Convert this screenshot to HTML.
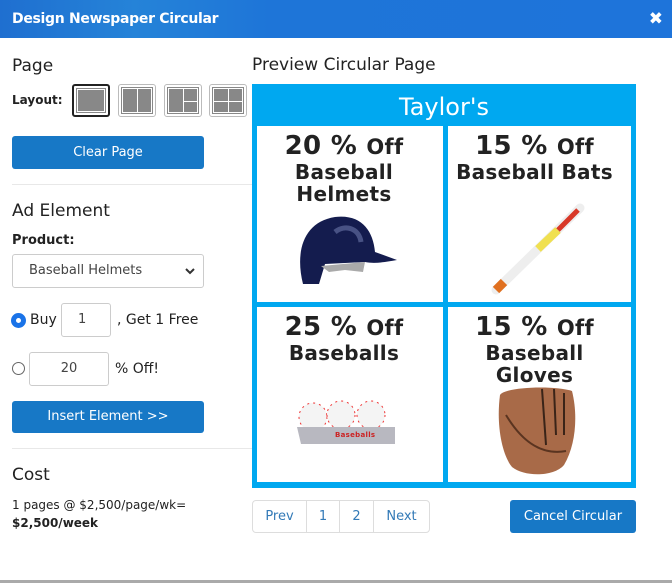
<!DOCTYPE html>
<html><head><style>
*{margin:0;padding:0;box-sizing:border-box}
body{width:672px;height:583px;background:#fff;font-family:"DejaVu Sans","Liberation Sans",sans-serif;color:#222;position:relative;overflow:hidden}
.a{position:absolute}
.hdr{left:0;top:0;width:672px;height:38px;background:linear-gradient(90deg,#1f6fd0 0%,#2583d8 20%,#1e75d8 40%,#1e74da 100%);color:#fff;font-weight:bold;font-size:14px;line-height:38px;padding-left:12px;letter-spacing:-0.3px}
.x{right:9px;top:0;color:#fff;font-size:17px;line-height:38px;font-weight:bold}
h3{position:absolute;font-weight:normal;font-size:17px;color:#222}
.btn{position:absolute;background:#1778c6;color:#fff;font-size:13px;text-align:center;border-radius:3px}
.lay{position:absolute;top:84px;width:38px;height:33px;border:1px solid #bbb;border-radius:3px;padding:3px}
.lay div{width:100%;height:100%;background:#888;border:1px solid #fff;outline:1px solid #888;position:relative}
.inp{position:absolute;border:1px solid #ccc;border-radius:3px;font-size:13px;color:#444;text-align:center}
.cell{position:absolute;background:#fff;text-align:center;font-weight:bold;color:#222;font-size:20px;line-height:22px;letter-spacing:0.3px}
.cell .p{font-size:26px;line-height:28px;margin-top:6px}
.cell .p span{font-size:21px}
.pg{position:absolute;top:500px;height:33px;border:1px solid #ddd;color:#337ab7;font-size:13px;line-height:31px;text-align:center}
</style></head><body>
<div class="a hdr">Design Newspaper Circular</div>
<div class="a x">✖</div>

<h3 style="left:12px;top:56px">Page</h3>
<div class="a" style="left:12px;top:93px;font-size:12px;font-weight:bold">Layout:</div>
<div class="lay" style="left:72px;border:2px solid #222"><div></div></div>
<div class="lay" style="left:118px"><div><span class="a" style="left:50%;top:0;bottom:0;width:1px;background:#fff"></span></div></div>
<div class="lay" style="left:164px"><div><span class="a" style="left:50%;top:0;bottom:0;width:1px;background:#fff"></span><span class="a" style="left:50%;right:0;top:50%;height:1px;background:#fff"></span></div></div>
<div class="lay" style="left:209px"><div><span class="a" style="left:50%;top:0;bottom:0;width:1px;background:#fff"></span><span class="a" style="left:0;right:0;top:50%;height:1px;background:#fff"></span></div></div>
<div class="btn" style="left:12px;top:136px;width:192px;height:33px;line-height:33px">Clear Page</div>
<div class="a" style="left:12px;top:184px;width:240px;height:1px;background:#e8e8e8"></div>
<h3 style="left:12px;top:201px">Ad Element</h3>
<div class="a" style="left:12px;top:233px;font-size:13px;font-weight:bold">Product:</div>
<div class="inp" style="left:12px;top:254px;width:192px;height:34px;line-height:32px;text-align:left;padding-left:16px">Baseball Helmets<svg class="a" style="right:8px;top:13px" width="10" height="7" viewBox="0 0 10 7"><path d="M1 1 L5 5 L9 1" stroke="#333" stroke-width="2" fill="none"/></svg></div>
<div class="a" style="left:12px;top:314px;width:13px;height:13px;border-radius:50%;border:4px solid #1a73e8;background:#fff;box-shadow:0 0 0 1px #1a73e8"></div>
<div class="a" style="left:30px;top:312px;font-size:14px">Buy</div>
<div class="inp" style="left:61px;top:303px;width:50px;height:34px;line-height:32px;text-align:left;padding-left:16px">1</div>
<div class="a" style="left:117px;top:312px;font-size:14px">, Get 1 Free</div>
<div class="a" style="left:12px;top:362px;width:13px;height:13px;border-radius:50%;border:1px solid #666"></div>
<div class="inp" style="left:29px;top:352px;width:80px;height:34px;line-height:32px">20</div>
<div class="a" style="left:115px;top:361px;font-size:14px">% Off!</div>
<div class="btn" style="left:12px;top:401px;width:192px;height:32px;line-height:32px">Insert Element &gt;&gt;</div>
<div class="a" style="left:12px;top:448px;width:240px;height:1px;background:#e8e8e8"></div>
<h3 style="left:12px;top:465px">Cost</h3>
<div class="a" style="left:12px;top:496px;font-size:12px;line-height:18px">1 pages @ $2,500/page/wk=<br><b>$2,500/week</b></div>

<h3 style="left:252px;top:55px">Preview Circular Page</h3>
<div class="a" style="left:252px;top:84px;width:384px;height:404px;background:#00a8f0"></div>
<div class="a" style="left:252px;top:93px;width:384px;text-align:center;color:#fff;font-size:24px">Taylor's</div>

<div class="cell" style="left:257px;top:126px;width:186px;height:176px;padding-right:12px">
<div class="p">20 % <span>Off</span></div>Baseball<br>Helmets
<svg class="a" style="left:38px;top:86px" width="106" height="80" viewBox="0 0 106 80"><path d="M8 72 C0 40 8 10 40 5 C66 2 78 18 80 40 L102 48 C90 50 80 52 70 50 L30 52 L24 72 Z" fill="#141c4e"/><path d="M26 54 L70 50 L68 60 L50 58 L34 60 Z" fill="#aaa"/><path d="M40 20 C50 12 64 16 66 30" stroke="#6b76a8" stroke-width="5" fill="none" opacity=".6"/></svg>
</div>
<div class="cell" style="left:448px;top:126px;width:183px;height:176px;padding-right:10px">
<div class="p">15 % <span>Off</span></div>Baseball Bats
<svg class="a" style="left:40px;top:76px" width="100" height="95" viewBox="0 0 100 95"><path d="M8 88 L92 6" stroke="#eee" stroke-width="9" stroke-linecap="round"/><path d="M50 47 L70 28" stroke="#f0e050" stroke-width="8"/><path d="M70 28 L90 8" stroke="#d83828" stroke-width="5"/><path d="M8 88 L16 80" stroke="#e07020" stroke-width="9"/></svg>
</div>
<div class="cell" style="left:257px;top:307px;width:186px;height:175px;padding-right:12px">
<div class="p">25 % <span>Off</span></div>Baseballs
<svg class="a" style="left:38px;top:92px" width="104" height="50" viewBox="0 0 104 50"><circle cx="18" cy="18" r="14" fill="#f4f4f4" stroke="#e33" stroke-dasharray="2 4"/><circle cx="46" cy="16" r="14" fill="#f4f4f4" stroke="#e33" stroke-dasharray="2 4"/><circle cx="76" cy="16" r="14" fill="#f4f4f4" stroke="#e33" stroke-dasharray="2 4"/><path d="M2 28 L100 28 L100 45 L6 45 Z" fill="#b8b8c0"/><text x="40" y="38" font-size="7" fill="#c22" font-weight="bold">Baseballs</text></svg>
</div>
<div class="cell" style="left:448px;top:307px;width:183px;height:175px;padding-right:10px">
<div class="p">15 % <span>Off</span></div>Baseball<br>Gloves
<svg class="a" style="left:46px;top:78px" width="84" height="92" viewBox="0 0 84 92"><path d="M6 10 C10 2 60 0 78 6 C84 30 82 60 70 80 C60 92 30 92 18 82 C8 70 2 40 6 10 Z" fill="#a86a48"/><path d="M48 4 L52 60 M60 4 L62 50 M70 8 L70 50" stroke="#3a2418" stroke-width="2"/><path d="M12 30 C30 60 50 70 72 66" stroke="#5a3420" stroke-width="2" fill="none"/></svg>
</div>

<div class="pg" style="left:252px;width:55px;border-radius:4px 0 0 4px">Prev</div>
<div class="pg" style="left:306px;width:34px">1</div>
<div class="pg" style="left:339px;width:35px">2</div>
<div class="pg" style="left:373px;width:57px;border-radius:0 4px 4px 0">Next</div>
<div class="btn" style="left:510px;top:500px;width:126px;height:33px;line-height:33px">Cancel Circular</div>
<div class="a" style="left:0;top:580px;width:672px;height:3px;background:#aaa"></div>
</body></html>
